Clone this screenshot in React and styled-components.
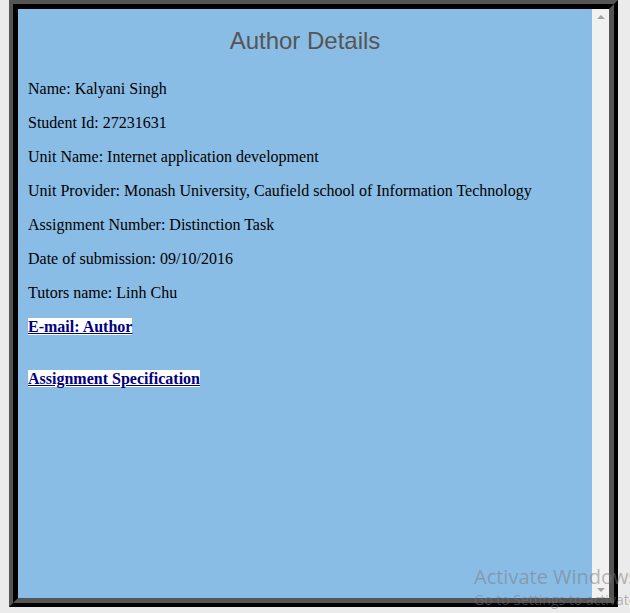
import React from "react";
import styled, { createGlobalStyle } from "styled-components";

const GlobalStyle = createGlobalStyle`
  html, body {
    margin: 0;
    padding: 0;
    background: #ebebeb;
    overflow: hidden;
  }
`;

const details = [
  "Name: Kalyani Singh",
  "Student Id: 27231631",
  "Unit Name: Internet application development",
  "Unit Provider: Monash University, Caufield school of Information Technology",
  "Assignment Number: Distinction Task",
  "Date of submission: 09/10/2016",
  "Tutors name: Linh Chu",
];

export default function App() {
  return (
    <Page>
      <GlobalStyle />
      <OuterFrame>
        <InnerFrame>
          <Content>
            <Title>Author Details</Title>
            {details.map((line) => (
              <Detail key={line}>{line}</Detail>
            ))}
            <LinkRow>
              <Link href="#">E-mail: Author</Link>
            </LinkRow>
            <LinkRow spaced>
              <Link href="#">Assignment Specification</Link>
            </LinkRow>
          </Content>
          <Scrollbar>
            <Arrow />
            <Arrow down />
          </Scrollbar>
        </InnerFrame>
      </OuterFrame>
      <Watermark>
        <WatermarkTitle>Activate Windows</WatermarkTitle>
        <WatermarkText>Go to Settings to activate Windows.</WatermarkText>
      </Watermark>
    </Page>
  );
}

const Page = styled.div`
  position: relative;
  width: 630px;
  height: 613px;
  padding-left: 9px;
  box-sizing: border-box;
  overflow: hidden;
`;

const OuterFrame = styled.div`
  width: 609px;
  height: 607px;
  box-sizing: border-box;
  border: 4px solid;
  border-color: #555555 #000000 #000000 #555555;
`;

const InnerFrame = styled.div`
  display: flex;
  height: 100%;
  box-sizing: border-box;
  border: 5px solid;
  border-color: #000000 #555555 #555555 #000000;
`;

const Content = styled.div`
  flex: 1;
  background: #8abde6;
  padding: 18px 10px 10px;
  font-family: "Liberation Serif", "Times New Roman", serif;
  font-size: 16px;
  color: #000;
`;

const Title = styled.h2`
  margin: 0 0 25px;
  font-family: "Liberation Sans", Arial, sans-serif;
  font-size: 24px;
  font-weight: normal;
  line-height: 28px;
  color: #555555;
  text-align: center;
`;

const Detail = styled.p`
  margin: 16px 0;
  line-height: 18px;

  &:first-of-type {
    margin-top: 0;
  }
`;

const LinkRow = styled.p`
  margin: ${(props) => (props.spaced ? "34px 0 0" : "16px 0")};
  line-height: 18px;
`;

const Link = styled.a`
  background: #ffffff;
  color: #000080;
  font-weight: bold;
  text-decoration: underline;
`;

const Scrollbar = styled.div`
  width: 17px;
  background: #f1f1f1;
  display: flex;
  flex-direction: column;
  justify-content: space-between;
  align-items: center;
  padding: 6px 0;
  box-sizing: border-box;
`;

const Arrow = styled.span`
  width: 0;
  height: 0;
  border-left: 4px solid transparent;
  border-right: 4px solid transparent;
  ${(props) =>
    props.down
      ? "border-top: 4px solid #a3a3a3;"
      : "border-bottom: 4px solid #a3a3a3;"}
`;

const Watermark = styled.div`
  position: absolute;
  left: 474px;
  top: 564px;
  white-space: nowrap;
  color: rgba(120, 120, 120, 0.5);
  font-family: "Open Sans", "Noto Sans", sans-serif;
  pointer-events: none;
`;

const WatermarkTitle = styled.div`
  font-size: 20px;
  line-height: 26px;
`;

const WatermarkText = styled.div`
  font-size: 14px;
  line-height: 20px;
`;
